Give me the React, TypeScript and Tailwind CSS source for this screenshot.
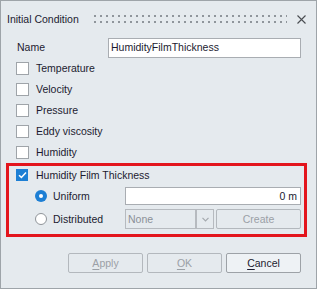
import React from "react";

const FONT = { fontFamily: '"Liberation Sans", Arial, sans-serif' };

const FIELDS = ["Temperature", "Velocity", "Pressure", "Eddy viscosity", "Humidity"];

function Box({ checked }: { checked?: boolean }) {
  if (checked) {
    return (
      <span className="w-[12px] h-[12px] bg-[#1d7fd4] flex items-center justify-center shrink-0">
        <svg width="9" height="8" viewBox="0 0 9 8">
          <path d="M1 4.2 L3.4 6.4 L8 1.4" fill="none" stroke="white" strokeWidth="1.5" />
        </svg>
      </span>
    );
  }
  return <span className="w-[13px] h-[13px] bg-white border border-[#9fa4a9] shrink-0" />;
}

function Radio({ checked }: { checked?: boolean }) {
  if (checked) {
    return (
      <span className="w-[12px] h-[12px] rounded-full bg-[#1d7fd4] flex items-center justify-center shrink-0">
        <span className="w-[4px] h-[4px] rounded-full bg-white" />
      </span>
    );
  }
  return <span className="w-[12px] h-[12px] rounded-full bg-white border border-[#8f9499] shrink-0" />;
}

function DlgButton({ label, under, rest, enabled }: { label?: string; under: string; rest: string; enabled?: boolean }) {
  return (
    <button
      className={`w-[75px] h-[20px] rounded-[2px] border flex items-center justify-center text-[10.5px] ${
        enabled ? "border-[#9da2a7] bg-[#eef2f5] text-[#1c1b30]" : "border-[#b3b8bd] bg-[#e5eaee] text-[#9ba0a6]"
      }`}
      aria-label={label}
    >
      <span className="underline underline-offset-2">{under}</span>
      {rest}
    </button>
  );
}

export default function App() {
  return (
    <div style={FONT} className="w-[317px] h-[289px] border border-[#9ea4a9] bg-[#e5eaee] flex flex-col text-[#1c1b30] text-[10.5px] leading-none">
      {/* title */}
      <div className="h-[36px] flex items-center pl-[6px] pr-[10px]">
        <span className="text-[10.5px]">Initial Condition</span>
        <svg className="flex-1 ml-[15px] mr-[10px]" height="8">
          <defs>
            <pattern id="grip" width="6" height="6" patternUnits="userSpaceOnUse">
              <rect x="0" y="0" width="2" height="2" fill="#8f959b" />
            </pattern>
          </defs>
          <rect x="0" y="0" width="100%" height="8" fill="url(#grip)" />
        </svg>
        <svg width="9" height="9" viewBox="0 0 9 9">
          <path d="M0.5 0.5 L8.5 8.5 M8.5 0.5 L0.5 8.5" stroke="#4a4d52" strokeWidth="1.1" />
        </svg>
      </div>

      {/* name */}
      <div className="h-[21px] flex items-center pl-[16px] pr-[15px]">
        <span className="w-[91px]">Name</span>
        <div className="flex-1 h-[20px] bg-white border border-[#a9adb2] flex items-center pl-[2px]">
          HumidityFilmThickness
        </div>
      </div>

      {/* checkbox list */}
      <div className="flex flex-col">
        {FIELDS.map((f) => (
          <div key={f} className="h-[21px] flex items-center pl-[15px] gap-[7px]">
            <Box />
            <span>{f}</span>
          </div>
        ))}
      </div>

      {/* highlighted group */}
      <div className="ml-[5px] w-[301px] h-[74px] border-[3px] border-[#e3151d] flex flex-col">
        <div className="h-[18px] flex items-center pl-[7px] gap-[8px]">
          <Box checked />
          <span>Humidity Film Thickness</span>
        </div>
        <div className="mt-[3px] h-[18px] flex items-center pr-[3px]">
          <div className="w-[116px] flex items-center pl-[26px] gap-[6px]">
            <Radio checked />
            <span>Uniform</span>
          </div>
          <div className="flex-1 h-[18px] bg-white border border-[#a9adb2] flex items-center justify-end pr-[3px]">
            0 m
          </div>
        </div>
        <div className="mt-[4px] h-[20px] flex items-center pr-[3px]">
          <div className="w-[116px] flex items-center pl-[26px] gap-[6px]">
            <Radio />
            <span>Distributed</span>
          </div>
          <div className="w-[71px] h-[20px] border border-[#b6babf] flex items-center pl-[2px] text-[#8b9098]">
            None
          </div>
          <div className="w-[18px] h-[20px] border border-[#b6babf] flex items-center justify-center">
            <svg width="7" height="5" viewBox="0 0 7 5">
              <path d="M0.5 0.8 L3.5 3.8 L6.5 0.8" fill="none" stroke="#a4a9ae" strokeWidth="1.2" />
            </svg>
          </div>
          <div className="ml-[2px] flex-1 h-[20px] rounded-[2px] border border-[#b3b8bd] flex items-center justify-center text-[#9ba0a6]">
            Create
          </div>
        </div>
      </div>

      {/* buttons */}
      <div className="mt-[16px] flex justify-end gap-[4px] pr-[15px]">
        <DlgButton under="A" rest="pply" />
        <DlgButton under="O" rest="K" />
        <DlgButton under="C" rest="ancel" enabled />
      </div>
    </div>
  );
}
